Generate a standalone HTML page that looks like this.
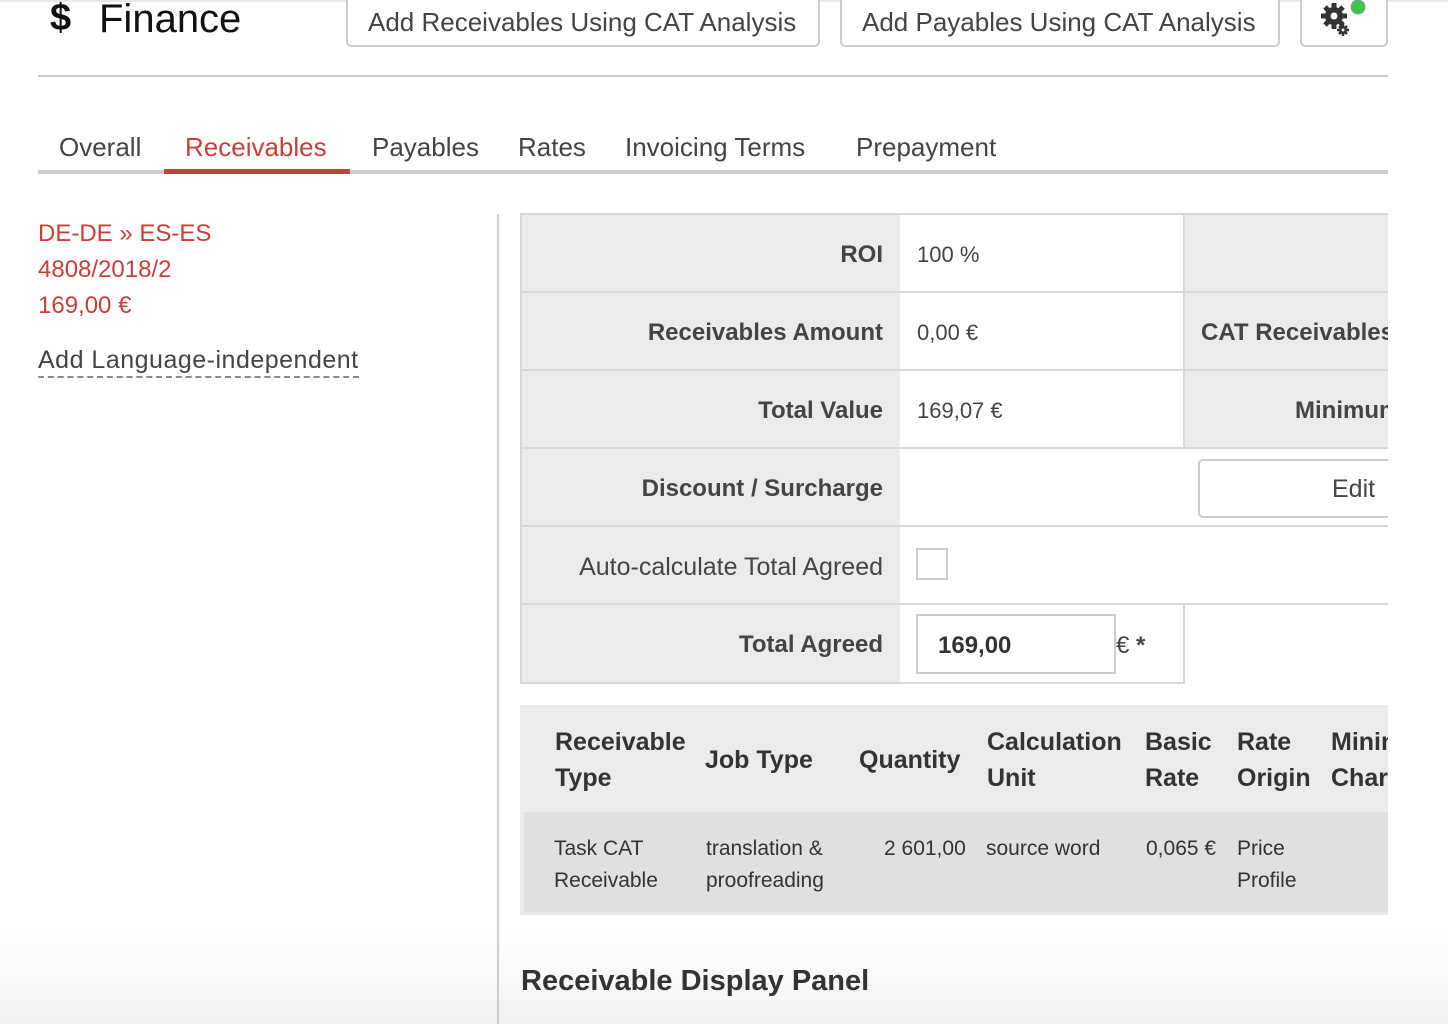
<!DOCTYPE html>
<html><head><meta charset="utf-8"><style>
*{margin:0;padding:0;box-sizing:border-box}
body{width:1448px;height:1024px;overflow:hidden;position:relative;font-family:"Liberation Sans",sans-serif;color:#444;background:linear-gradient(#fff 0,#fff 930px,#f2f2f2 1024px)}
.a{position:absolute;white-space:nowrap}
.btn{position:absolute;border:2px solid #ccc;border-radius:5px;background:#fff;font-size:26px;color:#444;text-align:left;padding-left:20px;white-space:nowrap}
.lab{position:absolute;background:#ebebeb;text-align:right;padding-right:17px;font-size:24px;font-weight:bold;color:#444;line-height:80px;border-bottom:2px solid #d8d8d8;white-space:nowrap}
.val{position:absolute;background:#fff;font-size:22px;color:#444;line-height:80px;padding-left:17px;border-bottom:2px solid #d8d8d8;white-space:nowrap}
.hd{position:absolute;font-size:25px;font-weight:bold;color:#333;line-height:36px;white-space:nowrap}
.bd{position:absolute;font-size:21px;color:#333;line-height:32px;white-space:nowrap}
</style></head><body>
<div class="a" style="left:0;top:0;width:1448px;height:2px;background:#e8e8e8"></div>
<div class="a" style="left:50px;top:-3px;font-size:38px;color:#111;font-weight:bold">$</div>
<div class="a" style="left:99px;top:-3px;font-size:40px;color:#111">Finance</div>
<div class="btn" style="left:346px;top:-10px;width:474px;height:57px;line-height:56px;padding-top:2px">Add Receivables Using CAT Analysis</div>
<div class="btn" style="left:840px;top:-10px;width:440px;height:57px;line-height:56px;padding-top:2px">Add Payables Using CAT Analysis</div>
<div class="btn" style="left:1300px;top:-10px;width:88px;height:57px"></div>
<svg class="a" style="left:1318px;top:0" width="50" height="38" viewBox="0 0 50 38">
<g fill="#333"><circle cx="16" cy="16" r="9"/><g stroke="#333" stroke-width="5"><line x1="16" y1="3" x2="16" y2="29"/><line x1="3" y1="16" x2="29" y2="16"/><line x1="7" y1="7" x2="25" y2="25"/><line x1="25" y1="7" x2="7" y2="25"/></g></g>
<circle cx="16" cy="16" r="3.5" fill="#fff"/>
<g fill="#333"><circle cx="25" cy="30" r="4"/><g stroke="#333" stroke-width="2.5"><line x1="25" y1="24" x2="25" y2="36"/><line x1="19" y1="30" x2="31" y2="30"/><line x1="21" y1="26" x2="29" y2="34"/><line x1="29" y1="26" x2="21" y2="34"/></g></g>
<circle cx="25" cy="30" r="1.5" fill="#fff"/>
<circle cx="40" cy="7" r="7" fill="#3ec64c" stroke="#999" stroke-width="1"/></svg>
<div class="a" style="left:38px;top:75px;width:1350px;height:2px;background:#c8c8c8"></div>
<div class="a" style="left:38px;top:170px;width:1350px;height:4px;background:#ccc"></div>
<div class="a" style="left:164px;top:169px;width:186px;height:5px;background:#c9403a"></div>
<div class="a" style="left:59px;top:132px;font-size:26px;color:#444">Overall</div>
<div class="a" style="left:185px;top:132px;font-size:26px;color:#c9403a">Receivables</div>
<div class="a" style="left:372px;top:132px;font-size:26px;color:#444">Payables</div>
<div class="a" style="left:518px;top:132px;font-size:26px;color:#444">Rates</div>
<div class="a" style="left:625px;top:132px;font-size:26px;color:#444">Invoicing Terms</div>
<div class="a" style="left:856px;top:132px;font-size:26px;color:#444">Prepayment</div>
<div class="a" style="left:38px;top:220px;font-size:24px;color:#c9403a">DE-DE » ES-ES</div>
<div class="a" style="left:38px;top:256px;font-size:24px;color:#c9403a">4808/2018/2</div>
<div class="a" style="left:38px;top:292px;font-size:24px;color:#c9403a">169,00 €</div>
<div class="a" style="left:38px;top:344px;font-size:25px;color:#444;border-bottom:2px dashed #888;line-height:32px;letter-spacing:0.5px">Add Language-independent</div>
<div class="a" style="left:497px;top:214px;width:2px;height:810px;background:#ccc"></div>
<div class="a" style="left:520px;top:213px;width:868px;height:2px;background:#d8d8d8"></div>
<div class="a" style="left:520px;top:213px;width:2px;height:471px;background:#d8d8d8"></div>
<div class="lab" style="left:522px;top:215px;width:378px;height:78px">ROI</div>
<div class="val" style="left:900px;top:215px;width:283px;height:78px">100 %</div>
<div class="lab" style="left:1183px;top:215px;width:205px;height:78px;border-left:2px solid #d8d8d8"></div>
<div class="lab" style="left:522px;top:293px;width:378px;height:78px">Receivables Amount</div>
<div class="val" style="left:900px;top:293px;width:283px;height:78px">0,00 €</div>
<div class="lab" style="left:1183px;top:293px;width:205px;height:78px;border-left:2px solid #d8d8d8;text-align:left;padding-left:16px;overflow:hidden">CAT Receivables</div>
<div class="lab" style="left:522px;top:371px;width:378px;height:78px">Total Value</div>
<div class="val" style="left:900px;top:371px;width:283px;height:78px">169,07 €</div>
<div class="lab" style="left:1183px;top:371px;width:205px;height:78px;border-left:2px solid #d8d8d8;text-align:left;padding-left:110px;overflow:hidden">Minimum</div>
<div class="lab" style="left:522px;top:449px;width:378px;height:78px">Discount / Surcharge</div>
<div class="val" style="left:900px;top:449px;width:488px;height:78px"></div>
<div class="a" style="left:1198px;top:459px;width:200px;height:59px;border:2px solid #ccc;border-radius:5px;font-size:25px;line-height:57px;padding-left:132px;color:#444;background:#fff">Edit</div>
<div class="a" style="left:1388px;top:440px;width:60px;height:100px;background:#fff"></div>
<div class="lab" style="left:522px;top:527px;width:378px;height:78px;font-weight:normal;font-size:25px">Auto-calculate Total Agreed</div>
<div class="val" style="left:900px;top:527px;width:488px;height:78px"></div>
<div class="a" style="left:916px;top:548px;width:32px;height:32px;border:2px solid #ccc;background:#fff"></div>
<div class="lab" style="left:522px;top:605px;width:378px;height:79px">Total Agreed</div>
<div class="val" style="left:900px;top:605px;width:285px;height:79px;border-right:2px solid #d8d8d8"></div>
<div class="a" style="left:916px;top:614px;width:200px;height:60px;border:2px solid #ccc;background:#fff;font-size:24px;font-weight:bold;line-height:60px;padding-left:20px;color:#333">169,00</div>
<div class="a" style="left:1116px;top:632px;font-size:24px;color:#444">€ <b>*</b></div>
<div class="a" style="left:520px;top:705px;width:868px;height:210px;background:#ebebeb;overflow:hidden">
<div class="hd" style="left:35px;top:19px">Receivable<br>Type</div>
<div class="hd" style="left:185px;top:37px">Job Type</div>
<div class="hd" style="left:339px;top:37px">Quantity</div>
<div class="hd" style="left:467px;top:19px">Calculation<br>Unit</div>
<div class="hd" style="left:625px;top:19px">Basic<br>Rate</div>
<div class="hd" style="left:717px;top:19px">Rate<br>Origin</div>
<div class="hd" style="left:811px;top:19px">Minimum<br>Charge</div>
<div class="a" style="left:4px;top:107px;width:864px;height:100px;background:#e0e0e0">
<div class="bd" style="left:30px;top:21px">Task CAT<br>Receivable</div>
<div class="bd" style="left:182px;top:21px">translation &amp;<br>proofreading</div>
<div class="bd" style="left:360px;top:21px">2 601,00</div>
<div class="bd" style="left:462px;top:21px">source word</div>
<div class="bd" style="left:622px;top:21px">0,065 €</div>
<div class="bd" style="left:713px;top:21px">Price<br>Profile</div>
</div></div>
<div class="a" style="left:521px;top:965px;font-size:29px;font-weight:bold;color:#333">Receivable Display Panel</div>
</body></html>
